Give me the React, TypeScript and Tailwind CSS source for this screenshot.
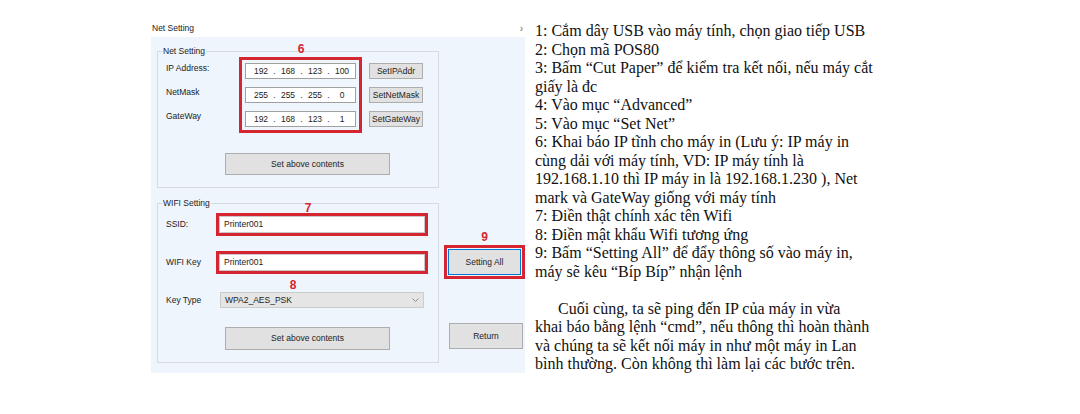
import { Fragment } from 'react';

const ui = { fontFamily: '"Liberation Sans", Arial, sans-serif' };
const serif = { fontFamily: '"Liberation Serif", "Times New Roman", serif' };

const steps = [
  '1: Cắm dây USB vào máy tính, chọn giao tiếp USB',
  '2: Chọn mã POS80',
  '3: Bấm “Cut Paper” để kiểm tra kết nối, nếu máy cắt',
  'giấy là đc',
  '4: Vào mục “Advanced”',
  '5: Vào mục “Set Net”',
  '6: Khai báo IP tĩnh cho máy in (Lưu ý: IP máy in',
  'cùng dải với máy tính, VD: IP máy tính là',
  '192.168.1.10 thì IP máy in là 192.168.1.230 ), Net',
  'mark và GateWay giống với máy tính',
  '7: Điền thật chính xác tên Wifi',
  '8: Điền mật khẩu Wifi tương ứng',
  '9: Bấm “Setting All” để đẩy thông số vào máy in,',
  'máy sẽ kêu “Bíp Bíp” nhận lệnh',
];

const ending = [
  'khai báo bằng lệnh “cmd”, nếu thông thì hoàn thành',
  'và chúng ta sẽ kết nối máy in như một máy in Lan',
  'bình thường. Còn không thì làm lại các bước trên.',
];

function IpField({ parts }: { parts: string[] }) {
  return (
    <div className="flex h-[16px] w-[111px] items-center border border-[#a0a0a0] bg-white pl-[4px] text-[#222]">
      {parts.map((p, i) => (
        <Fragment key={i}>
          {i > 0 && <span className="w-[5px] text-center">.</span>}
          <span className="w-[22px] text-center">{p}</span>
        </Fragment>
      ))}
    </div>
  );
}

function WinButton({ label, className }: { label: string; className: string }) {
  return (
    <div className={`flex items-center justify-center border border-[#adadad] bg-[#e1e1e1] text-[#222] ${className}`}>
      {label}
    </div>
  );
}

export default function App() {
  return (
    <div className="flex h-[414px] w-[1080px] items-start overflow-hidden bg-white">
      {/* dialog screenshot */}
      <div className="ml-[151px] mt-[20px] flex w-[374px] flex-col text-[8.5px]" style={ui}>
        <div className="flex h-[17px] items-center justify-between pl-[1px] pr-[2px] text-[#222]">
          <span>Net Setting</span>
          <span className="text-[10px] leading-none text-[#666]">›</span>
        </div>

        <div className="flex h-[336px] bg-[#eef5fc]">
          <div className="flex flex-col pl-[6px] pt-[14px]">
            {/* Net Setting group */}
            <div className="relative h-[137px] w-[282px] border border-[#d6dbe1]">
              <span className="absolute left-[4px] top-[-6px] bg-[#eef5fc] px-[1px] leading-[10px] text-[#222]">
                Net Setting
              </span>
              <span className="absolute left-[137px] top-[-11px] w-[12px] text-center text-[12px] font-bold leading-[16px] text-[#d42530]">
                6
              </span>
              <div className="mt-[5px] flex">
                <div className="flex w-[81px] flex-col gap-[8px] pl-[8px] pt-[3px] text-[#222]">
                  <div className="flex h-[16px] items-center">IP Address:</div>
                  <div className="flex h-[16px] items-center">NetMask</div>
                  <div className="flex h-[16px] items-center">GateWay</div>
                </div>
                <div className="flex flex-col gap-[8px] border-[3px] border-[#d42530] p-[3px]">
                  <IpField parts={['192', '168', '123', '100']} />
                  <IpField parts={['255', '255', '255', '0']} />
                  <IpField parts={['192', '168', '123', '1']} />
                </div>
                <div className="ml-[7px] flex flex-col gap-[8px] pt-[6px]">
                  <WinButton label="SetIPAddr" className="h-[16px] w-[54px]" />
                  <WinButton label="SetNetMask" className="h-[16px] w-[54px]" />
                  <WinButton label="SetGateWay" className="h-[16px] w-[54px]" />
                </div>
              </div>
              <WinButton label="Set above contents" className="ml-[67px] mt-[20px] h-[22px] w-[165px]" />
            </div>

            {/* WIFI Setting group */}
            <div className="relative mt-[15px] h-[160px] w-[282px] border border-[#d6dbe1]">
              <span className="absolute left-[4px] top-[-6px] bg-[#eef5fc] px-[1px] leading-[10px] text-[#222]">
                WIFI Setting
              </span>
              <span className="absolute left-[144px] top-[-4px] w-[12px] text-center text-[12px] font-bold leading-[16px] text-[#d42530]">
                7
              </span>
              <span className="absolute left-[129px] top-[73px] w-[12px] text-center text-[12px] font-bold leading-[16px] text-[#d42530]">
                8
              </span>
              <div className="mt-[9px] flex items-center pl-[8px] text-[#222]">
                <span className="w-[50px]">SSID:</span>
                <div className="h-[23px] w-[212px] border-[3px] border-[#d42530]">
                  <div className="flex h-full items-center border border-[#c8c8c8] bg-white pl-[4px]">Printer001</div>
                </div>
              </div>
              <div className="mt-[15px] flex items-center pl-[8px] text-[#222]">
                <span className="w-[50px]">WIFI Key</span>
                <div className="h-[23px] w-[212px] border-[3px] border-[#d42530]">
                  <div className="flex h-full items-center border border-[#c8c8c8] bg-white pl-[4px]">Printer001</div>
                </div>
              </div>
              <div className="mt-[18px] flex items-center pl-[8px] text-[#222]">
                <span className="w-[50px]">Key Type</span>
                <div className="ml-[4px] flex h-[16px] w-[204px] items-center justify-between border border-[#cccccc] bg-[#e5e5e5] pl-[4px] pr-[4px]">
                  <span>WPA2_AES_PSK</span>
                  <svg width="7" height="4" viewBox="0 0 7 4" fill="none">
                    <path d="M0.5 0.5 L3.5 3.5 L6.5 0.5" stroke="#777" strokeWidth="0.8" />
                  </svg>
                </div>
              </div>
              <WinButton label="Set above contents" className="ml-[67px] mt-[19px] h-[23px] w-[165px]" />
            </div>
          </div>

          {/* right buttons */}
          <div className="ml-[5px] mt-[192px] flex w-[81px] flex-col">
            <span className="h-[16px] text-center text-[12px] font-bold leading-[16px] text-[#d42530]">9</span>
            <div className="h-[34px] w-[81px] border-[3px] border-[#d42530] p-[1px]">
              <div className="flex h-full items-center justify-center border border-[#0078d7] bg-[#e1e1e1] text-[#222]">
                Setting All
              </div>
            </div>
            <WinButton label="Return" className="ml-[5px] mt-[44px] h-[26px] w-[74px]" />
          </div>
        </div>
      </div>

      {/* instructions */}
      <div className="ml-[10px] mt-[22px] text-[16px] leading-[18.5px] text-[#111]" style={serif}>
        {steps.map((s, i) => (
          <div key={i} className="whitespace-nowrap">
            {s}
          </div>
        ))}
        <div className="h-[18.5px]" />
        <div className="whitespace-nowrap pl-[23px]">Cuối cùng, ta sẽ ping đến IP của máy in vừa</div>
        {ending.map((s, i) => (
          <div key={i} className="whitespace-nowrap">
            {s}
          </div>
        ))}
      </div>
    </div>
  );
}
